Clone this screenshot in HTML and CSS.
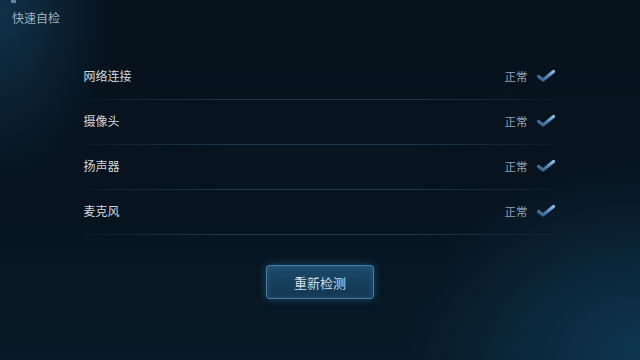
FILE: index.html
```html
<!DOCTYPE html>
<html lang="zh">

<head>
    <meta charset="UTF-8">
    <meta name="viewport" content="width=device-width, initial-scale=1.0">
    <title>快速自检</title>
    <link rel="stylesheet" href="styles.css">
</head>

<body>

    <svg width="0" height="0" class="defs">
        <defs>
            <linearGradient id="tickGrad" x1="0" y1="1" x2="1" y2="0">
                <stop offset="0" stop-color="#2f5f86" />
                <stop offset="0.5" stop-color="#4f87b8" />
                <stop offset="1" stop-color="#8cbde6" />
            </linearGradient>
        </defs>
    </svg>

    <div class="page">
        <span class="top-mark"></span>
        <h1 class="title">快速自检</h1>

        <!-- 检测项目 -->
        <ul class="check-list">
            <li class="check-item">
                <span class="name">网络连接</span>
                <span class="state">正常
                    <svg class="tick" viewBox="0 0 20 14" width="20" height="14">
                        <path d="M2.5 7.5 L7 11 L17.5 2.5" />
                    </svg>
                </span>
            </li>
            <li class="check-item">
                <span class="name">摄像头</span>
                <span class="state">正常
                    <svg class="tick" viewBox="0 0 20 14" width="20" height="14">
                        <path d="M2.5 7.5 L7 11 L17.5 2.5" />
                    </svg>
                </span>
            </li>
            <li class="check-item">
                <span class="name">扬声器</span>
                <span class="state">正常
                    <svg class="tick" viewBox="0 0 20 14" width="20" height="14">
                        <path d="M2.5 7.5 L7 11 L17.5 2.5" />
                    </svg>
                </span>
            </li>
            <li class="check-item">
                <span class="name">麦克风</span>
                <span class="state">正常
                    <svg class="tick" viewBox="0 0 20 14" width="20" height="14">
                        <path d="M2.5 7.5 L7 11 L17.5 2.5" />
                    </svg>
                </span>
            </li>
        </ul>

        <div class="actions">
            <button class="retry">重新检测</button>
        </div>
    </div>

</body>

</html>
```

FILE: styles.css
```css
html,
body {
    margin: 0;
    padding: 0;
    width: 640px;
    height: 360px;
    overflow: hidden;
}

body {
    font-family: "Noto Sans CJK SC", "Noto Sans", sans-serif;
    background-color: #07131d;
    background-image:
        radial-gradient(ellipse 230px 190px at 640px 350px, rgba(18, 72, 108, 0.6), rgba(18, 72, 108, 0) 100%),
        radial-gradient(ellipse 110px 170px at 0px 10px, rgba(22, 66, 98, 0.65), rgba(22, 66, 98, 0) 100%),
        linear-gradient(180deg, #06121c 0%, #07141f 60%, #081a27 100%);
}

.defs {
    position: absolute;
}

.page {
    position: relative;
    height: 360px;
}

.top-mark {
    position: absolute;
    left: 11px;
    top: 0;
    width: 5px;
    height: 3px;
    background: #8aa4b8;
    opacity: 0.7;
}

.title {
    margin: 0;
    padding: 9px 12px 0;
    height: 45px;
    box-sizing: border-box;
    font-size: 12px;
    font-weight: normal;
    line-height: 18px;
    color: #9fb1c0;
}

.check-list {
    list-style-type: none;
    margin: 10px auto 0;
    padding: 0;
    width: 475px;
    position: relative;
    left: -1px;
}

.check-item {
    display: flex;
    align-items: center;
    justify-content: space-between;
    height: 45px;
    box-sizing: border-box;
    padding: 0 1px 4px 2px;
    background: linear-gradient(90deg, rgba(40, 64, 84, 0.15), rgba(42, 66, 88, 0.75) 30%, rgba(42, 66, 88, 0.75) 70%, rgba(40, 64, 84, 0.15)) no-repeat bottom / 100% 1px;
}

.name {
    font-size: 12px;
    color: #d0d8df;
}

.state {
    display: flex;
    align-items: center;
    gap: 8px;
    font-size: 11.5px;
    color: #8ba1b5;
}

.tick {
    display: block;
}

.tick path {
    fill: none;
    stroke: url(#tickGrad);
    stroke-width: 3.2;
    stroke-linecap: round;
    stroke-linejoin: round;
}

.actions {
    display: flex;
    justify-content: center;
    margin-top: 30px;
}

.retry {
    width: 108px;
    height: 34px;
    padding: 0;
    border: 1px solid #4a7d9e;
    border-radius: 3px;
    background: linear-gradient(180deg, #1c4a6a 0%, #163f5c 55%, #143752 100%);
    box-shadow: 0 0 9px rgba(40, 130, 190, 0.5), inset 0 0 6px rgba(80, 150, 200, 0.25);
    font-family: "Noto Sans CJK SC", "Noto Sans", sans-serif;
    font-size: 13px;
    color: #d2dde6;
    cursor: pointer;
}
```
